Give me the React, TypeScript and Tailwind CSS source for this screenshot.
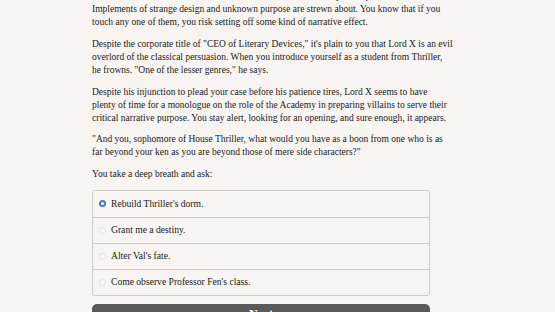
import { useState } from 'react';

// lines are given as in the source so they wrap the same way
const paragraphs = [
  [
    "Lord X's office is a vast chamber lined with shelves of manuscripts and proofs.",
    'Implements of strange design and unknown purpose are strewn about. You know that if you',
    'touch any one of them, you risk setting off some kind of narrative effect.',
  ],
  [
    'Despite the corporate title of "CEO of Literary Devices," it\'s plain to you that Lord X is an evil',
    'overlord of the classical persuasion. When you introduce yourself as a student from Thriller,',
    'he frowns. "One of the lesser genres," he says.',
  ],
  [
    'Despite his injunction to plead your case before his patience tires, Lord X seems to have',
    'plenty of time for a monologue on the role of the Academy in preparing villains to serve their',
    'critical narrative purpose. You stay alert, looking for an opening, and sure enough, it appears.',
  ],
  [
    '"And you, sophomore of House Thriller, what would you have as a boon from one who is as',
    'far beyond your ken as you are beyond those of mere side characters?"',
  ],
  ['You take a deep breath and ask:'],
];

const choices = [
  "Rebuild Thriller's dorm.",
  'Grant me a destiny.',
  "Alter Val's fate.",
  "Come observe Professor Fen's class.",
];

export default function App() {
  const [picked, setPicked] = useState(0);

  return (
    <div className="h-screen bg-[#f7f4f1] overflow-hidden font-['Liberation_Serif',serif] text-[#222]">
      <div className="ml-[92px] w-[338px] mt-[-10px]">
        {paragraphs.map((p, i) => (
          <p key={i} className="text-[9.5px] leading-[13px] mb-[8.8px]">
            {p.map(l => (
              <span key={l} className="block whitespace-nowrap">{l}</span>
            ))}
          </p>
        ))}

        {/* choices */}
        <div className="mt-[8px] border border-[#cfcbc7] rounded-[3px] bg-[#f7f4f1]">
          {choices.map((c, i) => (
            <label
              key={c}
              onClick={() => setPicked(i)}
              className={`flex items-center h-[26px] pl-[6px] gap-[3px] text-[9.6px] cursor-pointer ${i > 0 ? 'border-t border-[#cfcbc7]' : ''}`}
            >
              {picked === i ? (
                <span className="w-[7px] h-[7px] rounded-full bg-[#3e7ad6] flex items-center justify-center">
                  <span className="w-[3px] h-[3px] rounded-full bg-white" />
                </span>
              ) : (
                <span className="w-[7px] h-[7px] rounded-full border border-[#e6e2de] bg-[#faf8f6]" />
              )}
              <span className="ml-[2px]">{c}</span>
            </label>
          ))}
        </div>

        <button className="mt-[8px] w-full h-[30px] rounded-[5px] bg-[#5a5a5a] text-white text-[12px] font-bold pt-[4px] leading-none flex justify-center items-start">
          Next
        </button>
      </div>
    </div>
  );
}
